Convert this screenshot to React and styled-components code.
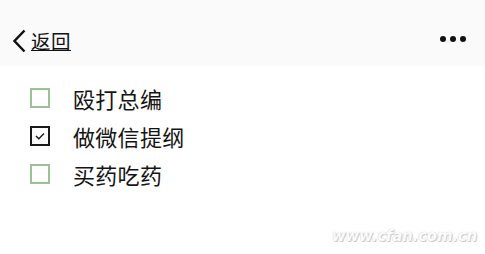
import React from "react";
import styled, { createGlobalStyle } from "styled-components";

const Global = createGlobalStyle`
  html, body { margin: 0; padding: 0; background: #fff; }
  body { font-family: "Noto Sans CJK SC", "Noto Sans", sans-serif; }
`;

const Page = styled.div`
  width: 485px;
  height: 254px;
  position: relative;
  overflow: hidden;
  background: #fff;
`;

const Header = styled.div`
  height: 66px;
  background: #fafafa;
  display: flex;
  align-items: center;
  justify-content: space-between;
  padding: 16px 19px 0 12px;
  box-sizing: border-box;
`;

const Back = styled.div`
  display: flex;
  align-items: center;
  gap: 5px;
`;

const BackText = styled.span`
  font-size: 19.5px;
  line-height: 19px;
  color: #111;
  border-bottom: 1.5px solid #111;
  padding-bottom: 0px;
  letter-spacing: 0.5px;
`;

const Dots = styled.div`
  display: flex;
  gap: 4px;
  margin-top: -4px;
`;

const Dot = styled.span`
  width: 6px;
  height: 6px;
  border-radius: 50%;
  background: #111;
`;

const List = styled.div`
  display: flex;
  flex-direction: column;
  gap: 18px;
  padding: 22px 0 0 30px;
`;

const Row = styled.div`
  display: flex;
  align-items: center;
  gap: 23px;
  height: 20px;
`;

const Box = styled.span`
  width: 20px;
  height: 20px;
  box-sizing: border-box;
  border: 2px solid ${(p) => (p.$checked ? "#1a1a1a" : "#9dc196")};
  display: flex;
  align-items: center;
  justify-content: center;
`;

const Label = styled.span`
  font-size: 22px;
  line-height: 22px;
  color: #141414;
  letter-spacing: 0.3px;
`;

const Watermark = styled.div`
  position: absolute;
  right: 8px;
  bottom: 9px;
  font-family: "DejaVu Sans", sans-serif;
  font-style: italic;
  font-weight: bold;
  font-size: 15px;
  color: #fbfbfb;
  text-shadow: 0 0 1px #bdbdbd, 1px 1px 0 #d0d0d0;
  letter-spacing: -0.2px;
`;

const items = [
  { text: "殴打总编", checked: false },
  { text: "做微信提纲", checked: true },
  { text: "买药吃药", checked: false },
];

export default function App() {
  return (
    <Page>
      <Global />
      <Header>
        <Back>
          <svg width="14" height="24" viewBox="0 0 14 24">
            <path d="M12.5 1.5 L2.5 12 L12.5 22.5" fill="none" stroke="#111" strokeWidth="2.5" />
          </svg>
          <BackText>返回</BackText>
        </Back>
        <Dots>
          <Dot />
          <Dot />
          <Dot />
        </Dots>
      </Header>
      <List>
        {items.map((it) => (
          <Row key={it.text}>
            <Box $checked={it.checked}>
              {it.checked && (
                <svg width="12" height="10" viewBox="0 0 12 10">
                  <path d="M2 5 L4.8 7.8 L10 2.5" fill="none" stroke="#1a1a1a" strokeWidth="1.4" />
                </svg>
              )}
            </Box>
            <Label>{it.text}</Label>
          </Row>
        ))}
      </List>
      <Watermark>www.cfan.com.cn</Watermark>
    </Page>
  );
}
